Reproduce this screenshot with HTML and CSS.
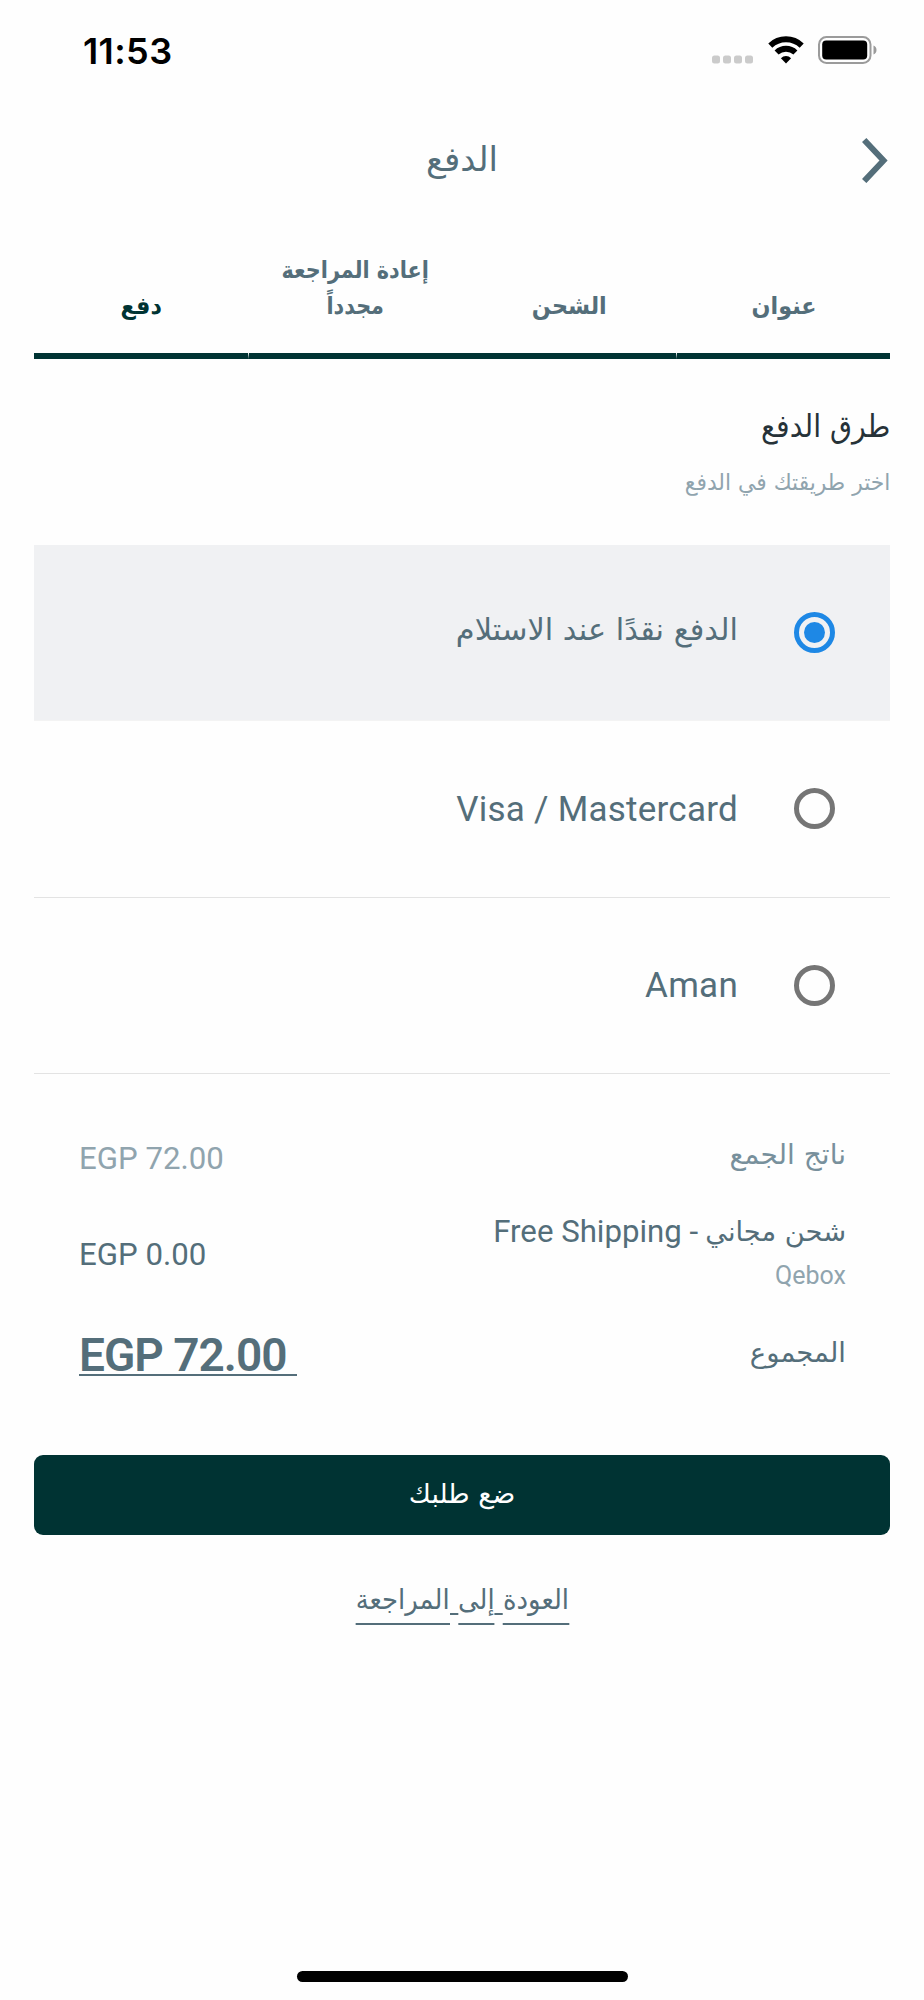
FILE: index.html
```html
<!DOCTYPE html>
<html lang="ar" dir="rtl">
<head>
<meta charset="utf-8">
<title>الدفع</title>
<link rel="stylesheet" href="styles.css">
</head>
<body>
<div class="screen">
  <div class="status" dir="ltr">
    <span class="time">11:53</span>
    <div class="indicators">
      <svg class="dots" width="42" height="28" viewBox="0 0 42 28"><g fill="#cbcbcb"><rect x="0" y="19.5" width="8" height="8" rx="2.5"/><rect x="11" y="19.5" width="8" height="8" rx="2.5"/><rect x="22" y="19.5" width="8" height="8" rx="2.5"/><rect x="33" y="19.5" width="8" height="8" rx="2.5"/></g></svg>
      <svg class="wifi" width="36" height="28" viewBox="0 0 36 28"><g fill="none" stroke="#000" stroke-width="5.8"><path d="M2.3 9.6a22.6 22.6 0 0 1 31.4 0"/><path d="M8.6 16.500a13.6 13.6 0 0 1 18.8 0"/></g><path d="M18 27.4l-5.1-5.2a7.3 7.3 0 0 1 10.2 0z"/></svg>
      <svg class="battery" width="60" height="28" viewBox="0 0 60 28"><rect x="1" y="1" width="51.500" height="26" rx="7.500" fill="none" stroke="#9b9b9b" stroke-width="2"/><rect x="4.200" y="4.500" width="45" height="19" rx="4"/><path d="M55.500 9.500c4 1.500 4 7.500 0 9z" fill="#9b9b9b"/></svg>
    </div>
  </div>

  <header class="header">
    <svg class="chevron" width="28" height="46" viewBox="0 0 28 46"><path d="M2.200 3L21.500 23.500L2.200 44" fill="none" stroke="#546e7a" stroke-width="6"/></svg>
    <h1 class="title">الدفع</h1>
  </header>

  <nav class="tabs">
    <div class="tab"><span class="tab-text">عنوان</span></div>
    <div class="tab"><span class="tab-text">الشحن</span></div>
    <div class="tab"><span class="tab-text t-review">إعادة المراجعة<br>مجدداً</span></div>
    <div class="tab tab-active"><span class="tab-text">دفع</span></div>
  </nav>

  <section class="intro">
    <h2 class="heading"><span>طرق الدفع</span></h2>
    <p class="hint"><span>اختر طريقتك في الدفع</span></p>
  </section>

  <div class="options">
    <div class="option selected"><i class="radio"></i><span class="option-ar">الدفع نقدًا عند الاستلام</span></div>
    <div class="option"><i class="radio"></i><span class="option-en">Visa / Mastercard</span></div>
    <div class="option"><i class="radio"></i><span class="option-en">Aman</span></div>
  </div>

  <div class="summary">
    <div class="line line-sub"><span class="label-sub">ناتج الجمع</span><span class="amount muted" dir="ltr">EGP 72.00</span></div>
    <div class="line line-ship">
      <div class="ship"><div class="ship-name"><span class="ship-ar">شحن مجاني</span><span class="ship-en" dir="ltr">Free Shipping -</span></div><div class="ship-by">Qebox</div></div>
      <span class="amount" dir="ltr">EGP 0.00</span>
    </div>
    <div class="line line-total"><span class="label-total">المجموع</span><span class="total" dir="ltr">EGP 72.00&nbsp;</span></div>
  </div>

  <button class="submit"><span>ضع طلبك</span></button>
  <a class="back"><span class="back-text"><span class="w">العودة</span><span class="s">&nbsp;</span><span class="w">إلى</span><span class="s">&nbsp;</span><span class="w">المراجعة</span></span></a>
  <div class="home"></div>
</div>
</body>
</html>
```

FILE: styles.css
```css
* { box-sizing: border-box; }
body { margin: 0; background: #fefefe; }
.screen { width: 924px; height: 2000px; display: flex; flex-direction: column; color: #546e7a; font-family: Roboto, "DejaVu Sans", sans-serif; }
.status { height: 100px; padding: 30px 46px 0 83px; display: flex; justify-content: space-between; align-items: flex-start; }
.time { font: 600 36px/42px Inter, sans-serif; letter-spacing: .4px; color: #000; }
.indicators { display: flex; padding-top: 6px; }
.dots { margin-right: 14px; }
.wifi { margin-right: 14px; }
.header { height: 120px; display: grid; grid-template-columns: 1fr; align-items: center; justify-items: center; padding: 0 34px; }
.chevron, .title { grid-area: 1 / 1; }
.chevron { justify-self: start; }
.title { margin: 0; padding-bottom: 2px; font: 400 34px/40px "DejaVu Sans", sans-serif; }
.tabs { height: 139px; margin: 0 34px; display: grid; grid-template-columns: repeat(4, 1fr); }
.tab { display: flex; align-items: flex-end; justify-content: center; text-align: center; border-bottom: 6px solid #003333; padding-bottom: 29px; }
.tab:first-child, .tab:nth-child(3) { border-left: 1px solid #fefefe; }
.tab-text { font: 700 24px/36px "DejaVu Sans", sans-serif; white-space: nowrap; transform: scaleX(.93); }
.t-review { transform: scaleX(.865); }
.tab-active { color: #003333; }
.intro { height: 186px; padding: 39px 34px 0; }
.heading { margin: 0; font: 400 31px/56px "DejaVu Sans", sans-serif; color: #263238; }
.heading span, .hint span { display: inline-block; transform: scaleX(.915); transform-origin: right; }
.hint { margin: 0; font: 400 23px/56px "DejaVu Sans", sans-serif; color: #90a4ae; }
.hint span { transform: scaleX(.95); }
.options { margin: 0 34px; }
.option { height: 176.3px; display: flex; align-items: center; padding-right: 55px; gap: 56px; border-bottom: 1px solid #e3e3e3; }
.option.selected { background: #f0f1f3; border-color: #f3f3f3; }
.radio { width: 41px; height: 41px; border: 5px solid #757575; border-radius: 50%; display: grid; place-items: center; }
.selected .radio { border-color: #1e88e5; }
.selected .radio::after { content: ""; width: 21px; height: 21px; border-radius: 50%; background: #1e88e5; }
.option-ar { padding-bottom: 6px; font: 400 30.4px/42px "DejaVu Sans", sans-serif; }
.option-en { padding-top: 2px; font: 400 35px/42px Roboto, sans-serif; letter-spacing: .25px; }
.summary { padding: 48px 78px 0 79px; height: 381px; }
.line { display: flex; justify-content: space-between; align-items: center; }
.line-sub { height: 72px; }
.line-ship { height: 120px; }
.line-total { height: 82px; }
.amount { padding-top: 2px; font-size: 31.2px; line-height: 40px; }
.muted { color: #90a4ae; }
.label-sub { padding-bottom: 6px; font: 400 28px/40px "DejaVu Sans", sans-serif; color: #78909c; }
.ship { padding-top: 5px; }
.ship-name { display: flex; gap: 7px; line-height: 40px; }
.ship-ar { font: 400 27.3px/40px "DejaVu Sans", sans-serif; }
.ship-en { font-size: 31.2px; }
.ship-by { font-size: 25px; line-height: 48px; color: #90a4ae; }
.label-total { padding-bottom: 6px; font: 400 27.5px/40px "DejaVu Sans", sans-serif; }
.total { height: 43px; font-size: 46px; font-weight: 600; line-height: 44px; letter-spacing: -1px; border-bottom: 2px solid #546e7a; }
.submit { margin: 0 34px; padding: 0 0 2px; height: 80px; border: 0; border-radius: 9px; background: #003333; color: #fff; font: 400 26.8px/40px "DejaVu Sans", sans-serif; }
.back { height: 120px; display: flex; justify-content: center; padding-top: 40px; font: 400 28px/50px "DejaVu Sans", sans-serif; }
.back-text { display: flex; transform: scaleX(.925); }
.w { height: 50px; border-bottom: 2px solid #546e7a; }
.s { width: 9px; height: 40px; border-bottom: 2px solid #546e7a; }
.home { width: 331px; height: 11px; border-radius: 6px; background: #000; margin: auto auto 18px; }
```
